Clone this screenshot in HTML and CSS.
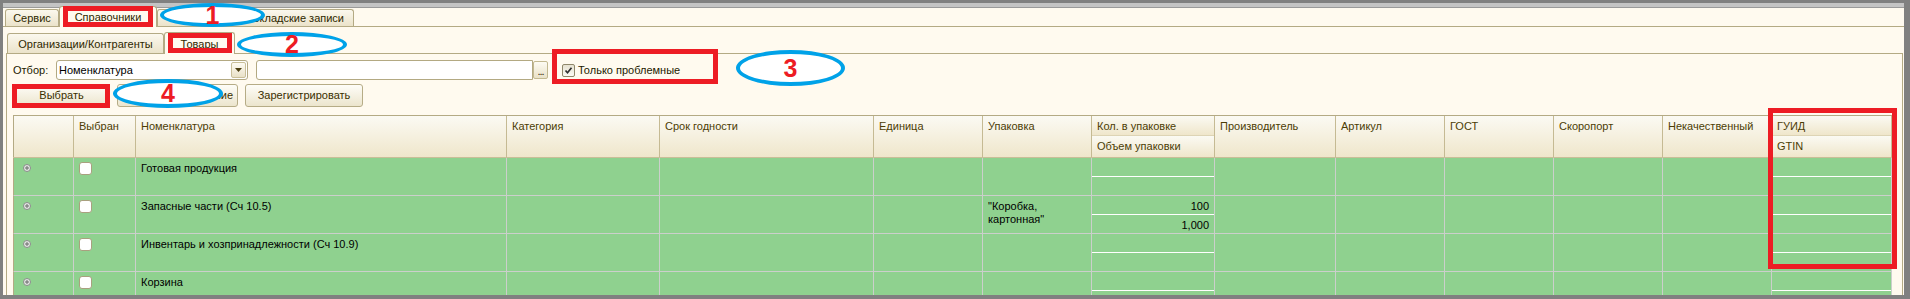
FILE: index.html
```html
<!DOCTYPE html>
<html lang="ru">
<head>
    <meta charset="UTF-8">
    <meta name="viewport" content="width=device-width, initial-scale=1.0">
    <title>Справочники - Товары</title>
    <link rel="stylesheet" href="styles.css">
</head>
<body>
    <div class="window">
        <div class="top-strip"></div>

        <!-- Главные закладки -->
        <div class="tabs tabs-main">
            <div class="tab tab-service">Сервис</div>
            <div class="tab tab-refs active">Справочники</div>
            <div class="tab tab-store">Складские записи</div>
        </div>

        <div class="sub-control">
            <!-- Закладки справочников -->
            <div class="tabs tabs-sub">
                <div class="tab tab-orgs">Организации/Контрагенты</div>
                <div class="tab tab-goods active">Товары</div>
            </div>

            <div class="panel">
                <!-- Отбор -->
                <div class="filter-row">
                    <span class="filter-label">Отбор:</span>
                    <div class="field field-kind">
                        <span class="field-text">Номенклатура</span>
                        <span class="drop-btn">
                            <svg width="7" height="4" viewBox="0 0 7 4"><path d="M0 0h7L3.5 4z" fill="#4a3d10"/></svg>
                        </span>
                    </div>
                    <div class="field field-value"></div>
                    <span class="dots-btn">...</span>
                    <label class="check">
                        <span class="check-box">
                            <svg width="11" height="11" viewBox="0 0 11 11"><path d="M2.5 5.5l2 2.2 4-5" fill="none" stroke="#2f2f2f" stroke-width="1.7"/></svg>
                        </span>
                        Только проблемные
                    </label>
                </div>

                <!-- Кнопки -->
                <div class="button-row">
                    <div class="btn btn-select">Выбрать</div>
                    <div class="btn btn-clear">выделение</div>
                    <div class="btn btn-register">Зарегистрировать</div>
                </div>

                <!-- Таблица товаров -->
                <div class="grid">
                    <div class="grid-head">
                        <div class="head-cell first"></div>
                        <div class="head-cell">Выбран</div>
                        <div class="head-cell">Номенклатура</div>
                        <div class="head-cell">Категория</div>
                        <div class="head-cell">Срок годности</div>
                        <div class="head-cell">Единица</div>
                        <div class="head-cell">Упаковка</div>
                        <div class="head-split">
                            <div class="head-sub">Кол. в упаковке</div>
                            <div class="head-sub">Объем упаковки</div>
                        </div>
                        <div class="head-cell">Производитель</div>
                        <div class="head-cell">Артикул</div>
                        <div class="head-cell">ГОСТ</div>
                        <div class="head-cell">Скоропорт</div>
                        <div class="head-cell">Некачественный</div>
                        <div class="head-split">
                            <div class="head-sub">ГУИД</div>
                            <div class="head-sub">GTIN</div>
                        </div>
                    </div>

                    <div class="grid-row">
                        <div class="cell first"><svg class="expand" width="8" height="8" viewBox="0 0 8 8"><circle cx="4" cy="4" r="3.5" fill="#e4e8e4" stroke="#8a8a8a"/><path d="M2 4h4M4 2v4" stroke="#6a6a6a"/></svg></div>
                        <div class="cell"><span class="row-check"></span></div>
                        <div class="cell">Готовая продукция</div>
                        <div class="cell"></div>
                        <div class="cell"></div>
                        <div class="cell"></div>
                        <div class="cell"></div>
                        <div class="cell split"><div class="sub"></div><div class="sub"></div></div>
                        <div class="cell"></div>
                        <div class="cell"></div>
                        <div class="cell"></div>
                        <div class="cell"></div>
                        <div class="cell"></div>
                        <div class="cell split"><div class="sub"></div><div class="sub"></div></div>
                    </div>

                    <div class="grid-row">
                        <div class="cell first"><svg class="expand" width="8" height="8" viewBox="0 0 8 8"><circle cx="4" cy="4" r="3.5" fill="#e4e8e4" stroke="#8a8a8a"/><path d="M2 4h4M4 2v4" stroke="#6a6a6a"/></svg></div>
                        <div class="cell"><span class="row-check"></span></div>
                        <div class="cell">Запасные части (Сч 10.5)</div>
                        <div class="cell"></div>
                        <div class="cell"></div>
                        <div class="cell"></div>
                        <div class="cell">"Коробка,<br>картонная"</div>
                        <div class="cell split"><div class="sub">100</div><div class="sub">1,000</div></div>
                        <div class="cell"></div>
                        <div class="cell"></div>
                        <div class="cell"></div>
                        <div class="cell"></div>
                        <div class="cell"></div>
                        <div class="cell split"><div class="sub"></div><div class="sub"></div></div>
                    </div>

                    <div class="grid-row">
                        <div class="cell first"><svg class="expand" width="8" height="8" viewBox="0 0 8 8"><circle cx="4" cy="4" r="3.5" fill="#e4e8e4" stroke="#8a8a8a"/><path d="M2 4h4M4 2v4" stroke="#6a6a6a"/></svg></div>
                        <div class="cell"><span class="row-check"></span></div>
                        <div class="cell">Инвентарь и хозпринадлежности (Сч 10.9)</div>
                        <div class="cell"></div>
                        <div class="cell"></div>
                        <div class="cell"></div>
                        <div class="cell"></div>
                        <div class="cell split"><div class="sub"></div><div class="sub"></div></div>
                        <div class="cell"></div>
                        <div class="cell"></div>
                        <div class="cell"></div>
                        <div class="cell"></div>
                        <div class="cell"></div>
                        <div class="cell split"><div class="sub"></div><div class="sub"></div></div>
                    </div>

                    <div class="grid-row">
                        <div class="cell first"><svg class="expand" width="8" height="8" viewBox="0 0 8 8"><circle cx="4" cy="4" r="3.5" fill="#e4e8e4" stroke="#8a8a8a"/><path d="M2 4h4M4 2v4" stroke="#6a6a6a"/></svg></div>
                        <div class="cell"><span class="row-check"></span></div>
                        <div class="cell">Корзина</div>
                        <div class="cell"></div>
                        <div class="cell"></div>
                        <div class="cell"></div>
                        <div class="cell"></div>
                        <div class="cell split"><div class="sub"></div><div class="sub"></div></div>
                        <div class="cell"></div>
                        <div class="cell"></div>
                        <div class="cell"></div>
                        <div class="cell"></div>
                        <div class="cell"></div>
                        <div class="cell split"><div class="sub"></div><div class="sub"></div></div>
                    </div>
                </div>
            </div>
        </div>
    </div>

    <!-- Пометки поверх скриншота -->
    <div class="mark mark-refs"></div>
    <div class="mark mark-goods"></div>
    <div class="mark mark-only"></div>
    <div class="mark mark-select"></div>
    <div class="mark mark-guid"></div>

    <div class="oval oval-1">1</div>
    <div class="oval oval-2">2</div>
    <div class="oval oval-3">3</div>
    <div class="oval oval-4">4</div>
</body>
</html>
```

FILE: styles.css
```css
/* Базовые настройки */
* {
    margin: 0;
    padding: 0;
    box-sizing: border-box;
}

body {
    position: relative;
    height: 299px;
    overflow: hidden;
    background: #808080;
    font-family: 'Liberation Sans', Arial, sans-serif;
    font-size: 11px;
    line-height: 13px;
    color: #000;
}

/* Окно */
.window {
    margin: 3px 6px 0 3px;
    height: 292px;
    background: #fffaef;
    overflow: hidden;
}

.top-strip {
    height: 5px;
    background: #c4c4c4;
    border-bottom: 1px solid #9a9a9a;
}

/* Закладки */
.tabs {
    display: flex;
    align-items: flex-start;
}

.tab {
    height: 17px;
    border: 1px solid #b4aa84;
    border-bottom: none;
    border-radius: 3px 3px 0 0;
    background: linear-gradient(#fbf8ee, #ebe3ca);
    color: #2e2800;
    display: flex;
    align-items: center;
    justify-content: center;
    white-space: nowrap;
    overflow: hidden;
}

.tab.active {
    background: #fffaef;
    position: relative;
}

.tabs-main {
    height: 19px;
    padding: 1px 0 0 2px;
    border-bottom: 1px solid #b4aa84;
}

.tab-service {
    width: 54px;
}

.tab-refs {
    width: 98px;
    height: 21px;
    margin-top: -3px;
}

.tab-store {
    width: 197px;
    justify-content: flex-end;
    padding-right: 9px;
}

.sub-control {
    margin: 0 1px 0 3px;
}

.tabs-sub {
    height: 26px;
    padding: 6px 0 0 1px;
}

.tabs-sub .tab {
    height: 20px;
    padding-top: 2px;
}

.tab-orgs {
    width: 157px;
}

.tab-goods {
    width: 71px;
}

.tabs-sub .tab.active {
    height: 22px;
    margin-top: -1px;
}

/* Панель справочника */
.panel {
    border: 1px solid #b4aa84;
    border-bottom: none;
    height: 250px;
    padding: 6px 9px 0 6px;
}

.filter-row {
    display: flex;
    align-items: center;
    height: 20px;
}

.filter-label {
    width: 43px;
    color: #1e1a00;
}

.field {
    height: 20px;
    border: 1px solid #b3a982;
    background: #fff;
    display: flex;
    align-items: center;
}

.field-kind {
    width: 192px;
    border-radius: 3px;
    justify-content: space-between;
    padding-left: 2px;
}

.field-text {
    color: #000;
}

.drop-btn {
    width: 15px;
    height: 16px;
    margin-right: 1px;
    border: 1px solid #c9bf99;
    border-radius: 2px;
    background: linear-gradient(#fdfbf3, #e9e1c7);
    display: flex;
    align-items: center;
    justify-content: center;
}

.field-value {
    width: 277px;
    margin-left: 8px;
    border-radius: 3px 0 0 3px;
}

.dots-btn {
    width: 15px;
    height: 18px;
    border: 1px solid #c2b890;
    border-radius: 2px;
    background: linear-gradient(#fdfbf3, #e9e1c7);
    color: #2e2800;
    font-size: 11px;
    line-height: 18px;
    text-align: center;
    letter-spacing: -1px;
}

.check {
    display: flex;
    align-items: center;
    margin-left: 14px;
    color: #1e1a00;
    gap: 3px;
}

.check-box {
    width: 13px;
    height: 13px;
    border: 1px solid #8f876a;
    border-radius: 2px;
    background: linear-gradient(#e6e1d0, #fbfaf4);
    display: flex;
    align-items: center;
    justify-content: center;
}

/* Кнопки */
.button-row {
    display: flex;
    gap: 7px;
    margin-top: 4px;
    height: 23px;
}

.btn {
    height: 23px;
    border: 1px solid #b6ac86;
    border-radius: 3px;
    background: linear-gradient(#fefdf8, #ece5cd);
    color: #3a2f00;
    display: flex;
    align-items: center;
    justify-content: center;
    white-space: nowrap;
    overflow: hidden;
}

.btn-select {
    width: 97px;
}

.btn-clear {
    width: 121px;
    justify-content: flex-end;
    padding-right: 4px;
}

.btn-register {
    width: 118px;
}

/* Таблица */
.grid {
    --cols: 61px 62px 371px 153px 214px 109px 109px 123px 121px 109px 109px 109px 109px 120px;
    width: 1879px;
    margin-top: 8px;
}

.grid-head {
    display: grid;
    grid-template-columns: var(--cols);
    height: 43px;
    border-top: 1px solid #b4aa84;
    border-bottom: 1px solid #c9be98;
    background: linear-gradient(#fbfaf3, #efe6cb);
}

.head-cell {
    border-right: 1px solid #c5ba93;
    padding: 4px 5px 0;
    color: #4c3d05;
    white-space: nowrap;
}

.head-cell.first,
.cell.first {
    border-left: 1px solid #b4aa84;
}

.head-split {
    display: flex;
    flex-direction: column;
    border-right: 1px solid #c5ba93;
}

.head-sub {
    height: 21px;
    padding: 4px 5px 0;
    color: #4c3d05;
    background: linear-gradient(#fbfaf3, #efe6cb);
}

.head-sub:first-child {
    height: 20px;
    border-bottom: 1px solid #ddd4b5;
}

.grid-row {
    display: grid;
    grid-template-columns: var(--cols);
    height: 38px;
    background: #8fd18f;
}

.cell {
    border-right: 1px solid #cbcfcb;
    border-bottom: 1px solid #cbcfcb;
    padding: 4px 5px 0;
    white-space: nowrap;
}

.cell.first {
    padding: 6px 0 0 9px;
}

.expand {
    display: block;
}

.row-check {
    display: block;
    width: 13px;
    height: 13px;
    background: #fff;
    border: 1px solid #a9a07f;
    border-radius: 3px;
}

.cell.split {
    display: flex;
    flex-direction: column;
    padding: 0;
}

.sub {
    height: 19px;
    border-bottom: 1px solid #ffffff;
    padding: 4px 5px 0;
    text-align: right;
}

.sub:last-child {
    flex: 1;
    border-bottom: none;
}

/* Красные рамки */
.mark {
    position: absolute;
    border: 5px solid #ed1c24;
}

.mark-refs {
    left: 63px;
    top: 6px;
    width: 90px;
    height: 21px;
}

.mark-goods {
    left: 168px;
    top: 33px;
    width: 64px;
    height: 20px;
}

.mark-only {
    left: 552px;
    top: 49px;
    width: 166px;
    height: 35px;
}

.mark-select {
    left: 12px;
    top: 84px;
    width: 98px;
    height: 24px;
}

.mark-guid {
    left: 1768px;
    top: 108px;
    width: 129px;
    height: 161px;
}

/* Синие овалы с номерами */
.oval {
    position: absolute;
    border: 4px solid #00a2e8;
    border-radius: 50%;
    background: #fff;
    color: #ed1c24;
    font-size: 25px;
    font-weight: bold;
    line-height: 1;
    display: flex;
    align-items: center;
    justify-content: center;
}

.oval-1 {
    left: 160px;
    top: 3px;
    width: 105px;
    height: 24px;
}

.oval-2 {
    left: 237px;
    top: 32px;
    width: 110px;
    height: 25px;
}

.oval-3 {
    left: 736px;
    top: 50px;
    width: 109px;
    height: 36px;
}

.oval-4 {
    left: 113px;
    top: 79px;
    width: 110px;
    height: 29px;
}
```
